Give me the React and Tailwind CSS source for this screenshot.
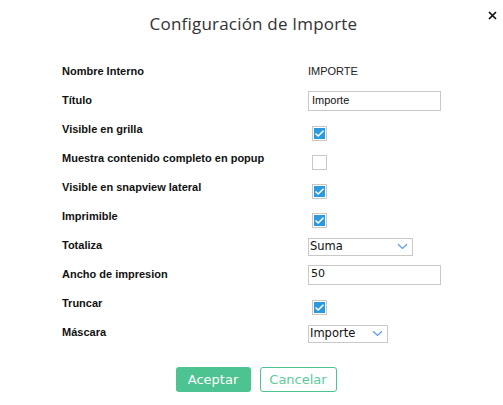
import React from "react";

function Check({ checked }) {
  return (
    <div className="h-[15px] w-[15px] border border-[#c8c8c8] bg-white p-px ml-[4px]">
      {checked && (
        <div className="h-full w-full bg-[#2b9be0] flex items-center justify-center">
          <svg width="11" height="9" viewBox="0 0 11 9">
            <path d="M1.5 4.5 L4.2 7 L9.5 1.8" fill="none" stroke="#fff" strokeWidth="1.6" />
          </svg>
        </div>
      )}
    </div>
  );
}

function Chevron() {
  return (
    <svg width="11" height="7" viewBox="0 0 11 7" className="shrink-0">
      <path d="M1 1.2 L5.5 5.5 L10 1.2" fill="none" stroke="#5b9bf0" strokeWidth="1.2" />
    </svg>
  );
}

function Row({ label, children }) {
  return (
    <div className="grid grid-cols-[246px_1fr] items-center h-[29px]">
      <div className="text-[11px] font-bold text-[#111]">{label}</div>
      <div className="flex items-center">{children}</div>
    </div>
  );
}

export default function App() {
  return (
    <div className="w-[503px] h-[405px] bg-white relative font-['Liberation_Sans',sans-serif]">
      <div className="absolute right-[6px] top-[11px]">
        <svg width="9" height="9" viewBox="0 0 9 9">
          <path d="M1 1 L8 8 M8 1 L1 8" stroke="#111" strokeWidth="1.7" />
        </svg>
      </div>
      <div className="pt-[11px] pl-[4px] h-[57px] text-center text-[17px] text-[#333] font-['Open_Sans',sans-serif] tracking-[0.2px]">
        Configuración de Importe
      </div>
      <div className="pl-[62px] pr-[20px]">
        <Row label="Nombre Interno">
          <span className="text-[11px] text-[#222]">IMPORTE</span>
        </Row>
        <Row label="Título">
          <div className="w-[133px] h-[20px] border border-[#c8c8c8] flex items-center px-[3px] text-[11px] text-[#111] font-['Liberation_Sans_Narrow','Liberation_Sans',sans-serif]">
            Importe
          </div>
        </Row>
        <Row label="Visible en grilla">
          <div className="pt-[7px]"><Check checked /></div>
        </Row>
        <Row label="Muestra contenido completo en popup">
          <div className="pt-[7px]"><Check /></div>
        </Row>
        <Row label="Visible en snapview lateral">
          <div className="pt-[7px]"><Check checked /></div>
        </Row>
        <Row label="Imprimible">
          <div className="pt-[7px]"><Check checked /></div>
        </Row>
        <Row label="Totaliza">
          <div className="w-[105px] h-[18px] mt-[2px] border border-[#c8c8c8] flex items-center justify-between pl-[1px] pr-[4px] text-[11.5px] text-[#111] font-['DejaVu_Sans',sans-serif]">
            <span>Suma</span>
            <Chevron />
          </div>
        </Row>
        <Row label="Ancho de impresion">
          <div className="w-[133px] h-[20px] border border-[#c8c8c8] flex items-center px-[2px] text-[11px] text-[#111] font-['DejaVu_Sans',sans-serif]">
            50
          </div>
        </Row>
        <Row label="Truncar">
          <div className="pt-[7px]"><Check checked /></div>
        </Row>
        <Row label="Máscara">
          <div className="w-[80px] h-[18px] mt-[2px] border border-[#c8c8c8] flex items-center justify-between pl-[1px] pr-[4px] text-[11.5px] text-[#111] font-['DejaVu_Sans',sans-serif]">
            <span>Importe</span>
            <Chevron />
          </div>
        </Row>
      </div>
      <div className="flex justify-center gap-[9px] mt-[20px] pl-[9px] font-['DejaVu_Sans',sans-serif] text-[13px]">
        <button className="w-[75px] h-[25px] rounded-[3px] bg-[#4cc390] text-white">Aceptar</button>
        <button className="w-[77px] h-[25px] rounded-[3px] border border-[#4cc390] bg-white text-[#5ccb9b]">Cancelar</button>
      </div>
    </div>
  );
}
